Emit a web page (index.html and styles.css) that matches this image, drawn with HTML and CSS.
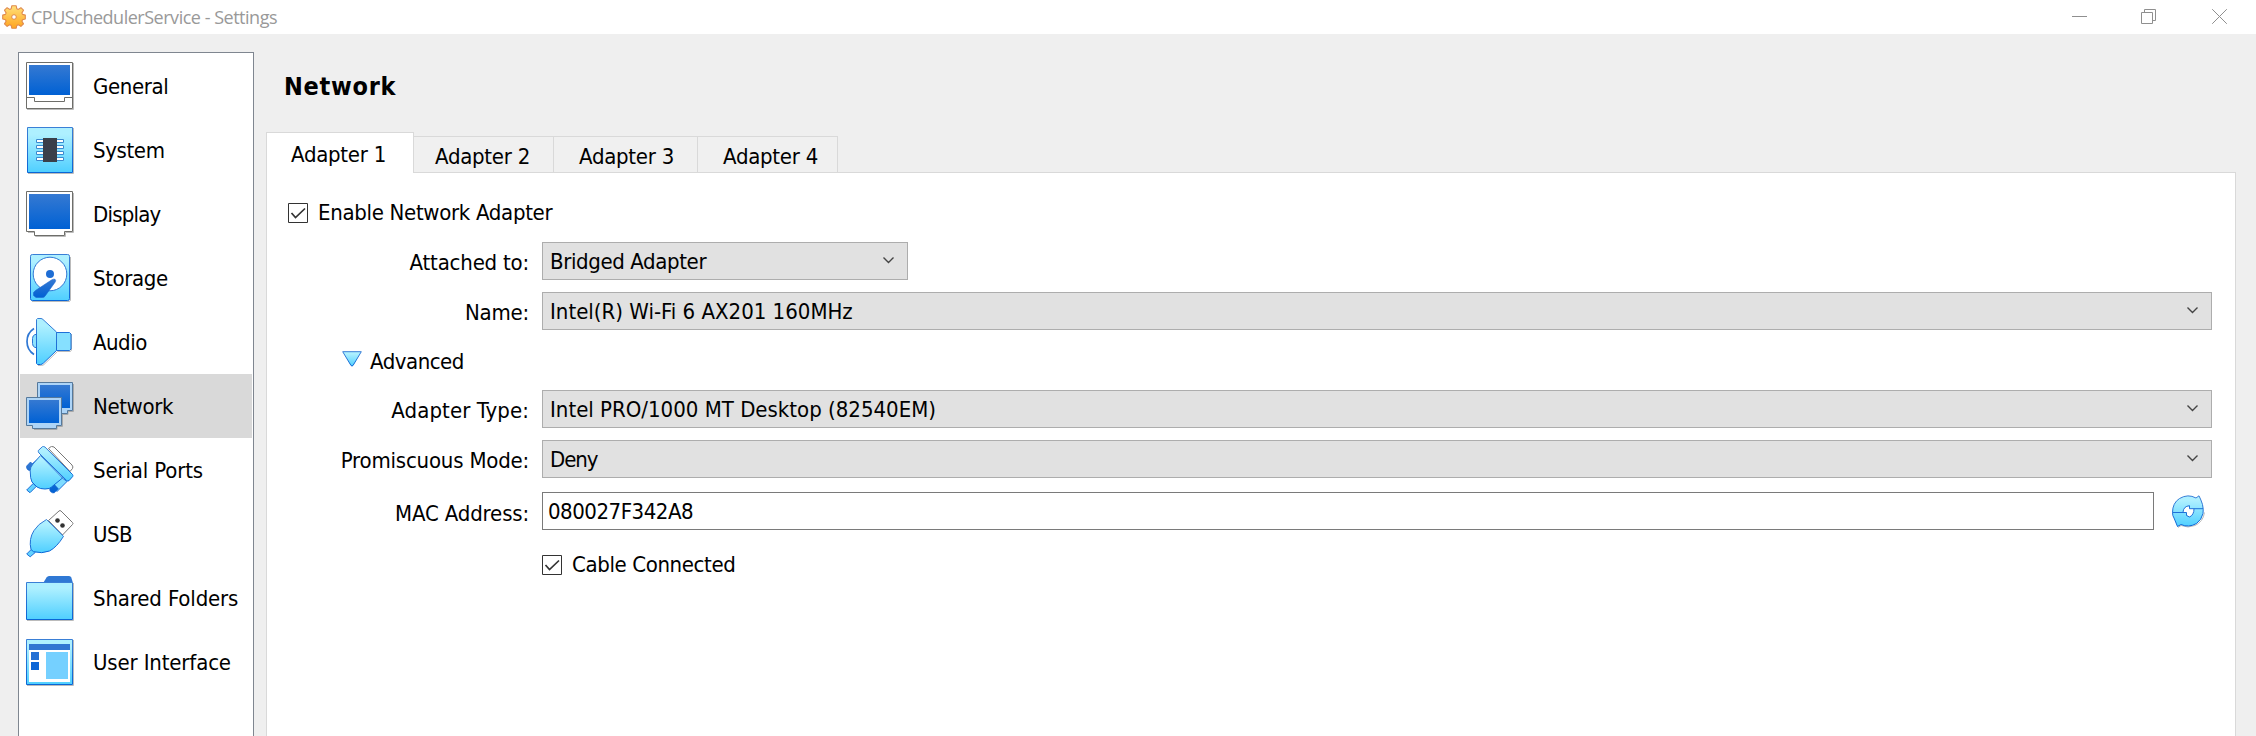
FILE: index.html
```html
<!DOCTYPE html>
<html lang="en">
<head>
<meta charset="utf-8">
<title>CPUSchedulerService - Settings</title>
<link rel="stylesheet" href="styles.css">
</head>
<body>
<svg class="defs" width="0" height="0" aria-hidden="true">
  <defs>
    <linearGradient id="sky" x1="0" y1="0" x2="0" y2="1"><stop offset="0.15" stop-color="#aef0ff"/><stop offset="1" stop-color="#4fcfff"/></linearGradient>
    <linearGradient id="screen" x1="0" y1="0" x2="0" y2="1"><stop offset="0" stop-color="#3579d2"/><stop offset="1" stop-color="#0061d4"/></linearGradient>
    <linearGradient id="edge" x1="0" y1="0" x2="0" y2="1"><stop offset="0" stop-color="#3a7fd6"/><stop offset="1" stop-color="#0a66d6"/></linearGradient>
    <linearGradient id="gold" x1="0" y1="0" x2="0" y2="1"><stop offset="0" stop-color="#ffe07a"/><stop offset="1" stop-color="#ffa51f"/></linearGradient>
  </defs>
</svg>

<header class="titlebar">
  <svg class="app-icon" width="24" height="24" viewBox="0 0 24 24">
    <path d="M9.8 .8h4.4l.6 2.9 1.5.7 2.6-1.7 2.6 2.5-1.6 2.7.6 1.5 2.8.7v3.9l-2.8.7-.6 1.5 1.6 2.7-2.6 2.5-2.6-1.6-1.5.7-.6 2.7H9.800l-.6-2.700-1.500-.7-2.600 1.600-2.600-2.500 1.600-2.700-.6-1.500L.7 14v-3.900l2.800-.7.6-1.500L2.500 5.200l2.600-2.500 2.600 1.700 1.500-.7z" fill="url(#gold)" stroke="#e08a4c" stroke-width="1.1" stroke-linejoin="round"/>
    <circle cx="12" cy="12" r="2.3" fill="#fff" stroke="#e08a4c"/>
  </svg>
  <span class="window-title">CPUSchedulerService - Settings</span>
  <div class="window-buttons">
    <svg width="16" height="16" viewBox="0 0 16 16"><path d="M0 7.5h15"/></svg>
    <svg width="16" height="16" viewBox="0 0 16 16"><path d="M.5 3.5h11v11H.5zM3.5 3.5v-3h11v11h-3"/></svg>
    <svg width="16" height="16" viewBox="0 0 16 16"><path d="M.2.2l14.6 14.6M14.8.2L.2 14.8"/></svg>
  </div>
</header>

<div class="window">
  <nav class="sidebar">
    <a class="item">
      <svg width="48" height="48" viewBox="0 0 48 48"><path d="M1 47.5h46.5V1" fill="none" stroke="#bbb"/><path d="M.5.5h46v46H.5z" fill="#fff" stroke="#6e6e6a"/><path d="M3 3h41v30H3z" fill="url(#screen)"/><path d="M.5 35.5h8v4h30v-4h8" fill="none" stroke="#6e6e6a"/></svg>
      <span class="t4">General</span>
    </a>
    <a class="item">
      <svg width="48" height="48" viewBox="0 0 48 48"><path d="M2 47.5h45.5V2" fill="none" stroke="#bbb"/><path d="M1.5 1.5h45v45h-45z" fill="url(#sky)" stroke="url(#edge)"/><path d="M10.5 13.5h27v3h-27zM10.5 19.5h27v3h-27zM10.5 25.5h27v3h-27zM10.5 31.5h27v3h-27z" fill="#fff" stroke="#3a8ad0"/><path d="M17 12h14v24H17z" fill="#3a3f4a"/></svg>
      <span class="t4">System</span>
    </a>
    <a class="item">
      <svg width="48" height="48" viewBox="0 0 48 48"><path d="M2 42.5h7.5v4h30v-4h8V3" fill="none" stroke="#bbb"/><path d="M.5 1.5h46v40h-8v4h-30v-4h-8z" fill="#fff" stroke="#6e6e6a"/><path d="M3 4h41v35H3z" fill="url(#screen)"/></svg>
      <span class="t8">Display</span>
    </a>
    <a class="item">
      <svg width="48" height="48" viewBox="0 0 48 48"><path d="M6 47.5h37a2 2 0 0 0 1.5-1.5V3" fill="none" stroke="#bbb"/><rect x="4.5" y=".5" width="39" height="46" rx="1.8" fill="url(#sky)" stroke="url(#edge)"/><circle cx="24" cy="20" r="16.8" fill="#fff" stroke="#2f78d4"/><circle cx="24" cy="20" r="4" fill="#1e6dd4"/><path d="M25.5 26q2-1.2 3.5-.7 1.2.8.2 2.7L19 42.2q-.8 1.3-2.5 1.3h-6.5l-2.5-2v-3l2-2z" fill="url(#screen)" stroke="#1c66ce" stroke-width=".6"/></svg>
      <span class="t4">Storage</span>
    </a>
    <a class="item">
      <svg width="48" height="48" viewBox="0 0 48 48"><path d="M12 47.5h3.5q1.5 0 2.5-1L31.5 33.5h13l1-1.5V16" fill="none" stroke="#bbb"/><path d="M8 10.5Q1 15 1 23.5t7 13" fill="none" stroke="#2f78d4" stroke-width="1.7"/><path d="M10.5 16.5H9q-2.5 1-2.5 4v5q0 3 2.5 4h1.5z" fill="#8fe3ff" stroke="#2a78d6"/><path d="M30.5 14.5h13l1.5 1.5v15l-1.5 1.5h-13z" fill="#86e0ff" stroke="#1f70d8"/><path d="M10.5 1.5l1-1h3.5q1 0 2 1L30.5 14v18.500L17.500 45q-1.500 1.500-3 1.500h-3l-1-1z" fill="url(#sky)" stroke="url(#edge)"/></svg>
      <span class="t5">Audio</span>
    </a>
    <a class="item selected">
      <svg width="48" height="48" viewBox="0 0 48 48"><path d="M37 32.5h5v-3h5.5V2M8 47.5h23v-3h5.5V17" fill="none" stroke="#a8a8a8"/><path d="M11.5.5h35v28h-5v3h-24v-3h-6z" fill="#add4f7" stroke="#55799c"/><path d="M14 3h30v23H14z" fill="url(#screen)"/><path d="M.5 15.5h35v28h-5v3h-24v-3h-6z" fill="#add4f7" stroke="#55799c"/><path d="M3 18h30v23H3z" fill="url(#screen)"/></svg>
      <span class="t4">Network</span>
    </a>
    <a class="item">
      <svg width="48" height="48" viewBox="0 0 48 48"><path d="M22.5 2.5q3-3.5 5.500-1.500l18 18q1.500 2 .5 3.500L44 25.500z" fill="#fff" stroke="#777"/><path d="M14 11L4.500 19.500l5 5 9.500-8.500zM35 31l-9 9.500 5 5 10-10z" fill="#7fdcff" stroke="#1f70d8"/><path d="M.7 20l3.800-4 4.500 4.500-3.500 3.700q-2.500 1-4-.7-1.500-1.700-.8-3.500zM24 42l4.300-3.500 4 4.300-4 4q-2 .5-3.800-1.200-1.300-1.600-.5-3.600z" fill="url(#screen)" stroke="#0f5fcb" stroke-width=".7"/><path d="M.7 44l6.500-6.500 3 3L4 46.700z" fill="#62d2ff" stroke="#1f70d8"/><path d="M14.500 9.500L7 18q-2.800 3-2.800 6.500 0 8.500 1.800 11.500l5 5q3 2 8 2t6.500-2l11-9z" fill="url(#sky)" stroke="url(#edge)"/><path d="M12.300 4.500L16.500.6q1.200-.5 2.500.5L46.500 28.500q.7 1 .2 2L43 34.700q-1.300.8-2.500-.3L13 7q-1-1.200-.7-2.500z" fill="url(#sky)" stroke="url(#edge)"/></svg>
      <span class="t1">Serial Ports</span>
    </a>
    <a class="item">
      <svg width="48" height="48" viewBox="0 0 48 48"><path d="M22.5 10.5L33 1q1-1 2 0l11.500 11.500q1 1 0 2L36.500 25z" fill="#fff" stroke="#777"/><circle cx="31.500" cy="10.500" r="2.300" fill="#333"/><circle cx="36.500" cy="15.500" r="2.300" fill="#333"/><path d="M.7 44l5-5 3.500 3.500-5 4.300z" fill="#62d2ff" stroke="#1f70d8"/><path d="M20.500 9.500L37.500 26.300Q31 37 23.500 41 16 44 7.500 41.700L5 39.500Q2.500 29 8 20.500 12 14 20.500 9.500z" fill="url(#sky)" stroke="url(#edge)"/></svg>
      <span class="t5">USB</span>
    </a>
    <a class="item">
      <svg width="48" height="48" viewBox="0 0 48 48"><path d="M1 46.5h46.5V9" fill="none" stroke="#bbb"/><path d="M17.5 8.5L20.5 3.5Q21.500 2 23 2h20q1.800 0 2.300 1.500L46.800 8.500z" fill="#2f78d4"/><path d="M.5 8.500h46v37H.5z" fill="url(#sky)" stroke="url(#edge)"/></svg>
      <span class="t1">Shared Folders</span>
    </a>
    <a class="item">
      <svg width="48" height="48" viewBox="0 0 48 48"><path d="M1 47.5h46.5V2" fill="none" stroke="#bbb"/><path d="M.5 1.5h46v45H.5z" fill="url(#sky)" stroke="url(#edge)"/><path d="M3 6h41v38H3z" fill="#fff"/><path d="M3 6h41v6H3z" fill="#3075d2"/><path d="M5 14h8v8H5z" fill="#2470d4"/><path d="M5 24h8v8H5z" fill="#0d66d6"/><path d="M20 14h22v27H20z" fill="#75d0ff"/></svg>
      <span class="t1">User Interface</span>
    </a>
  </nav>

  <main class="content">
    <h1>Network</h1>
    <div class="tabs">
      <div class="tab active">Adapter 1</div>
      <div class="tab">Adapter 2</div>
      <div class="tab tab-wide">Adapter 3</div>
      <div class="tab">Adapter 4</div>
    </div>
    <section class="pane">
      <label class="check enable"><svg class="box" width="20" height="20" viewBox="0 0 20 20"><path class="frame" d="M.5.5h19v19H.5z"/><path class="tick" d="M3.5 10l4 4.5L17 5.5"/></svg><span class="t3">Enable Network Adapter</span></label>
      <div class="form">
        <label class="lab t2">Attached to:</label>
        <div class="combo short"><span class="t4">Bridged Adapter</span><svg width="12" height="8" viewBox="0 0 12 8"><path d="M.5.5l5 5 5-5"/></svg></div>

        <label class="lab t2">Name:</label>
        <div class="combo"><span class="t0">Intel(R) Wi-Fi 6 AX201 160MHz</span><svg width="12" height="8" viewBox="0 0 12 8"><path d="M.5.5l5 5 5-5"/></svg></div>

        <div class="advanced"><svg width="20" height="16" viewBox="0 0 20 16"><path d="M.7.7h18.6L11 14.5q-1 1-2 0z" fill="url(#sky)" stroke="url(#edge)"/></svg><span class="t5">Advanced</span></div>

        <label class="lab tp">Adapter Type:</label>
        <div class="combo"><span class="t0">Intel PRO/1000 MT Desktop (82540EM)</span><svg width="12" height="8" viewBox="0 0 12 8"><path d="M.5.5l5 5 5-5"/></svg></div>

        <label class="lab t2">Promiscuous Mode:</label>
        <div class="combo"><span class="t10">Deny</span><svg width="12" height="8" viewBox="0 0 12 8"><path d="M.5.5l5 5 5-5"/></svg></div>

        <label class="lab mac-label t1">MAC Address:</label>
        <div class="mac-row">
          <div class="field t5">080027F342A8</div>
          <svg width="34" height="34" viewBox="0 0 34 34"><path d="M6 32.5l3-2q7 3 14 0 8-3.500 9.500-13" fill="none" stroke="#bbb"/><path d="M.5 17.5Q.5 8 7.500 3.500 16-1.500 24 3L27 .8q2 4 3.500 8.700 1.200 5 .5 9Q29.500 25 24.500 28.500 16.500 33 9 29.500L5.500 31.500 2 23Q.5 21 .5 17.500z" fill="url(#sky)" stroke="url(#edge)" stroke-linejoin="round"/><path d="M16 11.5q-4.500 0-5 6h3.500v2.500l3 1.500q4-1 4.500-5.500V13.700h-4.500v-2.500z" fill="#fff"/><path d="M.5 17.5H14.500v3l3 1.500q4.500-2 4.500-8.300M31 13.700H17.500v-3q-6 .5-6.500 6.500" fill="none" stroke="#1f70d8"/></svg>
        </div>

        <label class="check cable"><svg class="box" width="20" height="20" viewBox="0 0 20 20"><path class="frame" d="M.5.5h19v19H.5z"/><path class="tick" d="M3.5 10l4 4.5L17 5.5"/></svg><span class="t4">Cable Connected</span></label>
      </div>
    </section>
  </main>
</div>
</body>
</html>
```
FILE: styles.css
```css
* { box-sizing: border-box; }

body {
  margin: 0;
  height: 736px;
  overflow: hidden;
  display: flex;
  flex-direction: column;
  background: #efefef;
  color: #000;
  font: 22px/38px "DejaVu Sans Condensed", "DejaVu Sans", sans-serif;
}

svg { display: block; flex: none; }
.defs { position: absolute; }

/* Letter fitting */
.tp { letter-spacing: 0.09px; }
.t0 { letter-spacing: 0; }
.t1 { letter-spacing: -0.15px; }
.t2 { letter-spacing: -0.2px; }
.t3 { letter-spacing: -0.31px; }
.t4 { letter-spacing: -0.38px; }
.t5 { letter-spacing: -0.48px; }
.t8 { letter-spacing: -0.79px; }
.t10 { letter-spacing: -1.1px; }

/* Title bar */
.titlebar {
  flex: none;
  height: 34px;
  display: flex;
  align-items: flex-start;
  padding: 5px 28px 0 2px;
  background: #fff;
}
.window-title {
  flex: 1;
  margin: -1px 0 0 5px;
  color: #999;
  font: 18px/26px "Open Sans", sans-serif;
  letter-spacing: -0.48px;
}
.window-buttons {
  display: flex;
  gap: 53px;
  padding-top: 4px;
}
.window-buttons svg { fill: none; stroke: #8f8f8f; }
.window-buttons svg:last-child { margin-left: 2px; }

/* Window body */
.window {
  flex: 1;
  min-height: 0;
  display: flex;
  padding: 18px 20px 0 18px;
}

.sidebar {
  flex: none;
  width: 236px;
  padding: 1px;
  border: 1px solid #7f8690;
  border-bottom: 0;
  background: #fff;
}
.item {
  display: flex;
  align-items: center;
  height: 64px;
  padding-left: 6px;
  gap: 19px;
}
.item span { margin-top: 2px; }
.selected { background: #d9d9d9; }

.content {
  flex: 1;
  display: flex;
  flex-direction: column;
  margin-left: 12px;
}
h1 {
  margin: 15px 0 0 18px;
  font-size: 25px;
  line-height: 40px;
  letter-spacing: 0.72px;
}

/* Tabs */
.tabs {
  display: flex;
  align-items: flex-end;
  margin-top: 25px;
  letter-spacing: -0.26px;
}
.tab {
  width: 140px;
  height: 36px;
  padding-left: 21px;
  border: 1px solid #d9d9d9;
  border-left: 0;
  border-bottom: 0;
  background: #f0f0f0;
  line-height: 40px;
}
.tab-wide { width: 144px; padding-left: 25px; }
.tab:nth-child(4) { padding-left: 25px; }
.tab.active {
  z-index: 1;
  width: 148px;
  height: 41px;
  margin-bottom: -1px;
  padding-left: 24px;
  border-left: 1px solid #d9d9d9;
  background: #fff;
  line-height: 43px;
}
.pane {
  flex: 1;
  width: 1970px;
  border: 1px solid #d9d9d9;
  border-bottom: 0;
  background: #fff;
  padding: 20px 23px 0 21px;
}

/* Form */
.check { display: flex; align-items: center; gap: 10px; height: 38px; }
.check .box { margin-top: 1px; }
.frame { fill: #fff; stroke: #333; }
.tick { fill: none; stroke: #333; stroke-width: 1.7; }
.check span { margin-top: 2px; }

.form {
  display: grid;
  grid-template-columns: 241px 1fr;
  grid-template-rows: 38px 38px 36px 38px 38px 38px 38px;
  column-gap: 13px;
  row-gap: 12px;
  padding-top: 11px;
}
.lab { text-align: right; padding-top: 2px; }
.combo {
  display: flex;
  align-items: center;
  justify-content: space-between;
  border: 1px solid #adadad;
  background: #e1e1e1;
  padding: 0 12px 0 7px;
}
.combo span { margin-top: 2px; }
.combo svg { fill: none; stroke: #444; stroke-width: 1.4; }
.short { width: 366px; }
.advanced {
  grid-column: 1 / -1;
  display: flex;
  gap: 8px;
  padding: 0 0 0 54px;
}
.advanced svg { margin-top: 9px; }
.advanced span { margin-top: 1px; }
.mac-label { padding-top: 5px; }
.mac-row { display: flex; gap: 18px; margin-top: 2px; height: 38px; }
.mac-row svg { margin-top: 3px; }
.field {
  width: 1612px;
  padding-left: 5px;
  border: 1px solid #7a7a7a;
  background: #fff;
}
.cable { grid-column: 2; margin-top: 5px; }
```
